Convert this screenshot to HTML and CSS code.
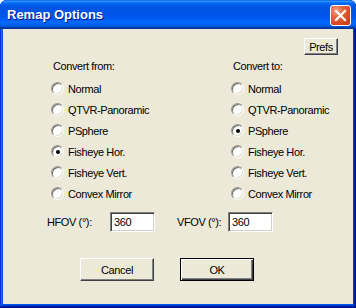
FILE: index.html
```html
<!DOCTYPE html>
<html>
<head>
<meta charset="utf-8">
<link rel="stylesheet" href="styles.css">
</head>
<body>
<div class="window">
  <div class="titlebar">
    <span class="title">Remap Options</span>
    <span class="close">
      <svg width="21" height="21" viewBox="0 0 21 21"><path d="M6 6 L15 15 M15 6 L6 15" stroke="#fff" stroke-width="2.2" stroke-linecap="square"/></svg>
    </span>
  </div>
  <div class="client">
    <div class="prefs-row"><span class="btn prefs">Prefs</span></div>
    <div class="columns">
      <div class="group">
        <div class="group-label">Convert from:</div>
        <div class="opt"><span class="radio"></span>Normal</div>
        <div class="opt"><span class="radio"></span>QTVR-Panoramic</div>
        <div class="opt"><span class="radio"></span>PSphere</div>
        <div class="opt"><span class="radio checked"></span>Fisheye Hor.</div>
        <div class="opt"><span class="radio"></span>Fisheye Vert.</div>
        <div class="opt"><span class="radio"></span>Convex Mirror</div>
      </div>
      <div class="group">
        <div class="group-label">Convert to:</div>
        <div class="opt"><span class="radio"></span>Normal</div>
        <div class="opt"><span class="radio"></span>QTVR-Panoramic</div>
        <div class="opt"><span class="radio checked"></span>PSphere</div>
        <div class="opt"><span class="radio"></span>Fisheye Hor.</div>
        <div class="opt"><span class="radio"></span>Fisheye Vert.</div>
        <div class="opt"><span class="radio"></span>Convex Mirror</div>
      </div>
    </div>
    <div class="fov-row">
      <span class="fov-label h">HFOV (°):</span>
      <span class="field">360</span>
      <span class="fov-label v">VFOV (°):</span>
      <span class="field">360</span>
    </div>
    <div class="buttons">
      <span class="btn action">Cancel</span>
      <span class="btn action default">OK</span>
    </div>
  </div>
</div>
</body>
</html>
```
FILE: styles.css
```css
html, body {
  margin: 0;
  padding: 0;
  background: #ffffff;
}
.window {
  width: 356px;
  height: 308px;
  box-sizing: border-box;
  display: flex;
  flex-direction: column;
  background: #0054e3;
  border-radius: 7px 7px 0 0;
  box-shadow: inset -1px -1px #00138c, inset 1px 1px #0831d9, inset -2px -2px #001ea0, inset 2px 2px #166aee, inset -3px -3px #003bda, inset 3px 3px #0855dd;
  font-family: "Liberation Sans", Arial, sans-serif;
  font-size: 11px;
  letter-spacing: -0.4px;
  color: #000;
}
.titlebar {
  height: 29px;
  flex: none;
  display: flex;
  align-items: flex-start;
  justify-content: space-between;
  border-radius: 7px 7px 0 0;
  background: linear-gradient(180deg, #0058ee 0%, #3593ff 4%, #288eff 6%, #127dff 8%, #036ffc 10%, #0262ee 14%, #0057e5 20%, #0054e3 24%, #0055eb 56%, #005bf5 66%, #026afe 76%, #0062ef 86%, #0052d6 92%, #0040ab 94%, #003092 100%);
  padding: 0 5px 0 7px;
}
.title {
  font-family: "Liberation Sans", Arial, sans-serif;
  font-weight: bold;
  font-size: 13px;
  color: #fff;
  line-height: 16px;
  margin-top: 7px;
  text-shadow: 1px 1px #0f1089;
  letter-spacing: 0;
}
.close {
  width: 21px;
  height: 21px;
  margin-top: 5px;
  box-sizing: border-box;
  border: 1px solid #fff;
  border-radius: 3px;
  background: radial-gradient(circle at 30% 25%, #f0a080 0%, #e4643e 35%, #d2441c 75%, #c03a18 100%);
  display: flex;
  align-items: center;
  justify-content: center;
}
.close svg {
  display: block;
  margin: -1px;
}
.client {
  flex: 1;
  margin: 0 3px 4px 3px;
  background: #ece9d8;
  display: flex;
  flex-direction: column;
}
.prefs-row {
  display: flex;
  justify-content: flex-end;
  padding: 9px 15px 0 0;
}
.btn {
  box-sizing: border-box;
  display: flex;
  align-items: center;
  justify-content: center;
  background: #ece9d8;
  border: 1px solid;
  border-color: #fff #404040 #404040 #fff;
  box-shadow: inset -1px -1px #808080, inset 1px 1px #ece9d8;
  line-height: 14px;
  white-space: nowrap;
}
.prefs {
  width: 34px;
  height: 17px;
}
.columns {
  display: grid;
  grid-template-columns: 180px 1fr;
  padding: 4px 0 0 48px;
}
.group-label {
  height: 14px;
  line-height: 14px;
  padding-left: 2px;
  margin-bottom: 5px;
}
.opt {
  height: 21px;
  display: flex;
  align-items: center;
  gap: 4px;
  white-space: nowrap;
}
.radio {
  position: relative;
  width: 13px;
  height: 13px;
  box-sizing: border-box;
  border-radius: 50%;
  border: 1px solid;
  border-color: #9a9890 #fdfdfb #fdfdfb #9a9890;
  box-shadow: inset 1px 1px #6e6d68, inset -1px -1px #dcd9cb;
  background: #fff;
  flex: none;
}
.radio.checked::after {
  content: "";
  position: absolute;
  left: 3.5px;
  top: 3.5px;
  width: 4px;
  height: 4px;
  border-radius: 50%;
  background: #000;
}
.fov-row {
  display: flex;
  align-items: center;
  padding: 8px 0 0 44px;
  white-space: nowrap;
}
.fov-label.h {
  width: 63px;
}
.fov-label.v {
  width: 51px;
  margin-left: 22px;
}
.field {
  width: 45px;
  height: 20px;
  box-sizing: border-box;
  border: 1px solid;
  border-color: #808080 #fff #fff #808080;
  box-shadow: inset 1px 1px #404040, inset -1px -1px #d4d0c8;
  background: #fff;
  padding: 0 0 0 3px;
  line-height: 18px;
}
.buttons {
  display: flex;
  gap: 26px;
  padding: 26px 0 0 77px;
}
.action {
  width: 74px;
  height: 23px;
}
.action.default {
  border: 1px solid #000;
  box-shadow: inset 1px 1px #fff, inset -1px -1px #404040, inset -2px -2px #808080;
}
```
